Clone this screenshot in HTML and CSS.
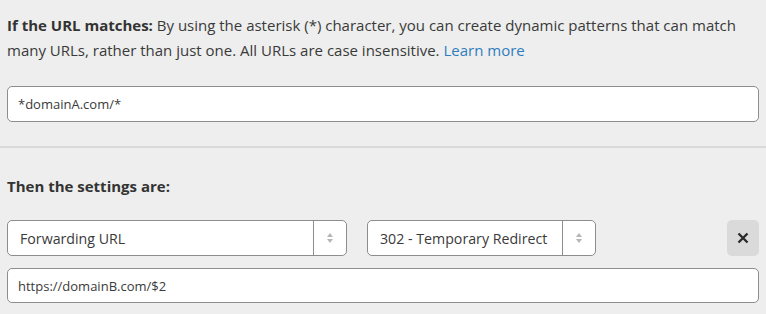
FILE: index.html
```html
<!DOCTYPE html>
<html>
<head>
<meta charset="utf-8">
<link rel="stylesheet" href="styles.css">
</head>
<body>
<section class="section top">
  <p class="desc"><strong>If the URL matches:</strong> By using the asterisk (*) character, you can create dynamic patterns that can match many URLs, rather than just one. All URLs are case insensitive. <a href="#" class="link">Learn more</a></p>
  <div class="field">*domainA.com/*</div>
</section>
<hr class="divider">
<section class="section bottom">
  <h3 class="label">Then the settings are:</h3>
  <div class="row">
    <div class="select sel-a"><span class="sel-text">Forwarding URL</span><span class="sel-arrow"><svg width="8" height="12" viewBox="0 0 8 12"><path d="M4 1 L7 5 H1 Z" fill="#b5b5b5"/><path d="M4 11 L7 7 H1 Z" fill="#b5b5b5"/></svg></span></div>
    <div class="select sel-b"><span class="sel-text">302 - Temporary Redirect</span><span class="sel-arrow"><svg width="8" height="12" viewBox="0 0 8 12"><path d="M4 1 L7 5 H1 Z" fill="#b5b5b5"/><path d="M4 11 L7 7 H1 Z" fill="#b5b5b5"/></svg></span></div>
    <button class="remove"><svg width="12" height="12" viewBox="0 0 12 12"><path d="M1.5 1.5 L10.5 10.5 M10.5 1.5 L1.5 10.5" stroke="#2b2b2b" stroke-width="2.4"/></svg></button>
  </div>
  <div class="field field-url">https://domainB.com/$2</div>
</section>
</body>
</html>
```
FILE: styles.css
```css
html, body {
  margin: 0;
  padding: 0;
  background: #edeeed;
}
body {
  font-family: "Open Sans", "Noto Sans", sans-serif;
  color: #3a3a3a;
  width: 766px;
  height: 314px;
  overflow: hidden;
}
.section {
  padding: 0 7px;
}
.top {
  padding-top: 13px;
  padding-bottom: 24px;
}
.desc {
  margin: 0;
  font-size: 15px;
  line-height: 25px;
}
.desc strong {
  color: #333;
}
.link {
  color: #2f7dbd;
  text-decoration: none;
}
.field {
  box-sizing: border-box;
  margin-top: 23px;
  height: 36px;
  background: #fff;
  border: 1px solid #8d8d8d;
  border-radius: 5px;
  padding: 0 10px;
  display: flex;
  align-items: center;
  font-size: 13px;
  color: #3a3a3a;
}
.divider {
  margin: 0;
  border: 0;
  height: 2px;
  background: #d8d9d8;
}
.bottom {
  padding-top: 28px;
}
.label {
  margin: 0;
  font-size: 15px;
  font-weight: 700;
  line-height: 20px;
  color: #333;
}
.row {
  margin-top: 24px;
  display: flex;
  align-items: center;
  height: 36px;
}
.select {
  box-sizing: border-box;
  height: 36px;
  background: #fff;
  border: 1px solid #8d8d8d;
  border-radius: 5px;
  display: flex;
  align-items: stretch;
  font-size: 14.2px;
}
.sel-a {
  width: 340px;
}
.sel-b {
  width: 229px;
  margin-left: 20px;
}
.sel-text {
  flex: 1;
  display: flex;
  align-items: center;
  padding-left: 12px;
  white-space: nowrap;
}
.sel-arrow {
  width: 32px;
  border-left: 1px solid #8d8d8d;
  display: flex;
  align-items: center;
  justify-content: center;
}
.remove {
  margin-left: auto;
  width: 32px;
  height: 36px;
  border: 0;
  border-radius: 5px;
  background: #d9dad9;
  display: flex;
  align-items: center;
  justify-content: center;
  padding: 0;
}
.field-url {
  margin-top: 12px;
  height: 35px;
  padding-left: 10px;
}
```
